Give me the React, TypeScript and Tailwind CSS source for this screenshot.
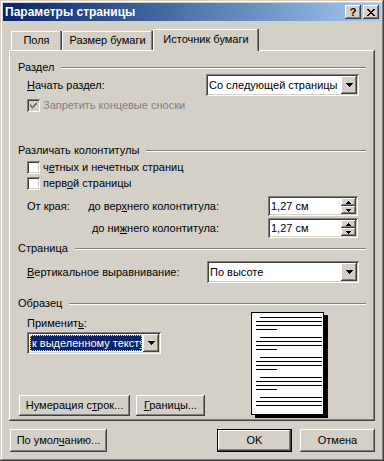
import React from "react";

const raised =
  "shadow-[inset_-1px_-1px_#404040,inset_1px_1px_#ffffff,inset_-2px_-2px_#808080]";
const sunken =
  "shadow-[inset_1px_1px_#808080,inset_-1px_-1px_#ffffff,inset_2px_2px_#404040,inset_-2px_-2px_#d4d0c8]";

function DownArrow() {
  return (
    <svg width="7" height="4" viewBox="0 0 7 4" shapeRendering="crispEdges">
      <rect x="0" y="0" width="7" height="1" />
      <rect x="1" y="1" width="5" height="1" />
      <rect x="2" y="2" width="3" height="1" />
      <rect x="3" y="3" width="1" height="1" />
    </svg>
  );
}

function SmallArrow({ up }: { up?: boolean }) {
  return (
    <svg width="5" height="3" viewBox="0 0 5 3" shapeRendering="crispEdges">
      {up ? (
        <>
          <rect x="2" y="0" width="1" height="1" />
          <rect x="1" y="1" width="3" height="1" />
          <rect x="0" y="2" width="5" height="1" />
        </>
      ) : (
        <>
          <rect x="0" y="0" width="5" height="1" />
          <rect x="1" y="1" width="3" height="1" />
          <rect x="2" y="2" width="1" height="1" />
        </>
      )}
    </svg>
  );
}

function CheckBox({ checked, disabled }: { checked?: boolean; disabled?: boolean }) {
  return (
    <div
      className={`w-[13px] h-[13px] shrink-0 flex items-center justify-center ${
        disabled ? "bg-[#d4d0c8]" : "bg-white"
      } ${sunken}`}
    >
      {checked && (
        <svg width="7" height="7" viewBox="0 0 7 7" shapeRendering="crispEdges" fill={disabled ? "#808080" : "#000"}>
          <rect x="0" y="2" width="1" height="3" />
          <rect x="1" y="3" width="1" height="3" />
          <rect x="2" y="4" width="1" height="3" />
          <rect x="3" y="3" width="1" height="3" />
          <rect x="4" y="2" width="1" height="3" />
          <rect x="5" y="1" width="1" height="3" />
          <rect x="6" y="0" width="1" height="3" />
        </svg>
      )}
    </div>
  );
}

function GroupHeader({ title, className }: { title: string; className: string }) {
  return (
    <div className={`flex items-center h-[13px] pl-[9px] pr-[9px] ${className}`}>
      <span>{title}</span>
      <div className="flex-1 ml-[7px] h-[2px] border-t border-t-[#808080] border-b border-b-white" />
    </div>
  );
}

function Combo({ text, className, focused }: { text: string; className: string; focused?: boolean }) {
  return (
    <div className={`h-[22px] bg-white flex items-center p-[2px] ${sunken} ${className}`}>
      {focused ? (
        <div className="flex-1 h-full p-[1px] overflow-hidden">
          <div className="h-full bg-[#0a246a] text-white border border-dotted border-[#f5db95] whitespace-nowrap overflow-hidden flex items-center pl-[1px]">
            {text}
          </div>
        </div>
      ) : (
        <div className="flex-1 pl-[1px] whitespace-nowrap overflow-hidden">{text}</div>
      )}
      <div className={`w-[16px] h-full shrink-0 bg-[#d4d0c8] flex items-center justify-center ${raised}`}>
        <DownArrow />
      </div>
    </div>
  );
}

function Spin({ value }: { value: string }) {
  return (
    <div className={`w-[90px] h-[20px] bg-white flex items-center p-[2px] ${sunken}`}>
      <div className="flex-1 pl-[1px]">{value}</div>
      <div className="w-[15px] h-full flex flex-col shrink-0">
        <div className={`flex-1 bg-[#d4d0c8] flex items-center justify-center ${raised}`}>
          <SmallArrow up />
        </div>
        <div className={`flex-1 bg-[#d4d0c8] flex items-center justify-center ${raised}`}>
          <SmallArrow />
        </div>
      </div>
    </div>
  );
}

function Button({ children, className }: { children: React.ReactNode; className: string }) {
  return (
    <div className={`bg-[#d4d0c8] flex items-center justify-center ${raised} ${className}`}>{children}</div>
  );
}

function Paragraph({ lines }: { lines: number }) {
  return (
    <div className="flex flex-col gap-[3px]">
      <div className="h-[1px] bg-black ml-[8px] mr-[1px]" />
      <div className="h-[1px] bg-black ml-[4px] mr-[1px]" />
      <div className="h-[1px] bg-black ml-[4px] mr-[1px]" />
      {lines > 3 && <div className="h-[1px] bg-black ml-[4px] w-[21px]" />}
    </div>
  );
}

export default function App() {
  return (
    <div
      className={`w-[384px] h-[461px] bg-[#d4d0c8] p-[3px] flex flex-col text-[11px] leading-[13px] text-black font-['Liberation_Sans',Arial,sans-serif] shadow-[inset_-1px_-1px_#404040,inset_1px_1px_#d4d0c8,inset_-2px_-2px_#808080,inset_2px_2px_#ffffff]`}
    >
      {/* title bar */}
      <div className="h-[18px] bg-linear-to-r from-[#0a246a] to-[#a6caf0] flex items-center pl-[2px] pr-[2px]">
        <span className="flex-1 text-white font-bold text-[12px]">Параметры страницы</span>
        <Button className="w-[16px] h-[14px] font-bold text-[11px] leading-[11px]">?</Button>
        <Button className="w-[16px] h-[14px] ml-[2px]">
          <svg width="8" height="7" viewBox="0 0 8 7" shapeRendering="crispEdges">
            <rect x="0" y="0" width="2" height="1" />
            <rect x="6" y="0" width="2" height="1" />
            <rect x="1" y="1" width="2" height="1" />
            <rect x="5" y="1" width="2" height="1" />
            <rect x="2" y="2" width="4" height="1" />
            <rect x="3" y="3" width="2" height="1" />
            <rect x="2" y="4" width="4" height="1" />
            <rect x="1" y="5" width="2" height="1" />
            <rect x="5" y="5" width="2" height="1" />
            <rect x="0" y="6" width="2" height="1" />
            <rect x="6" y="6" width="2" height="1" />
          </svg>
        </Button>
      </div>

      {/* tabs */}
      <div className="mt-[8px] h-[21px] ml-[8px] flex items-end">
        <div className="w-[51px] h-[19px] flex items-center justify-center bg-[#d4d0c8] shadow-[inset_-1px_0_#404040,inset_-2px_0_#808080,inset_1px_1px_#ffffff]">
          Поля
        </div>
        <div className="w-[91px] h-[19px] flex items-center justify-center bg-[#d4d0c8] shadow-[inset_-1px_0_#404040,inset_-2px_0_#808080,inset_1px_1px_#ffffff]">
          Размер бумаги
        </div>
        <div className="relative z-10 w-[106px] h-[22px] -mb-[1px] pb-[2px] flex items-center justify-center bg-[#d4d0c8] shadow-[inset_-1px_0_#404040,inset_-2px_0_#808080,inset_1px_1px_#ffffff]">
          Источник бумаги
        </div>
      </div>

      {/* panel */}
      <div className="ml-[6px] w-[366px] h-[371px] flex flex-col shadow-[inset_-1px_-1px_#404040,inset_1px_1px_#ffffff,inset_-2px_-2px_#808080]">
        <GroupHeader title="Раздел" className="mt-[11px]" />
        <div className="h-[22px] flex items-center justify-between pl-[18px] pr-[16px]">
          <span>
            <u>Н</u>ачать раздел:
          </span>
          <Combo text="Со следующей страницы" className="w-[153px]" />
        </div>
        <div className="mt-[3px] h-[13px] flex items-center pl-[18px]">
          <CheckBox checked disabled />
          <span className="ml-[3px] text-[#808080]">Запретить концевые сноски</span>
        </div>

        <GroupHeader title="Различать колонтитулы" className="mt-[32px]" />
        <div className="mt-[4px] h-[13px] flex items-center pl-[18px]">
          <CheckBox />
          <span className="ml-[3px]">
            ч<u>е</u>тных и нечетных страниц
          </span>
        </div>
        <div className="mt-[3px] h-[13px] flex items-center pl-[18px]">
          <CheckBox />
          <span className="ml-[3px]">
            перв<u>о</u>й страницы
          </span>
        </div>
        <div className="mt-[6px] h-[20px] flex items-center pl-[18px] pr-[17px]">
          <div className="w-[192px] flex justify-between">
            <span>От края:</span>
            <span>
              до вер<u>х</u>него колонтитула:
            </span>
          </div>
          <div className="ml-auto">
            <Spin value="1,27 см" />
          </div>
        </div>
        <div className="mt-[2px] h-[20px] flex items-center pl-[18px] pr-[17px]">
          <div className="w-[192px] text-right">
            до ни<u>ж</u>него колонтитула:
          </div>
          <div className="ml-auto">
            <Spin value="1,27 см" />
          </div>
        </div>

        <GroupHeader title="Страница" className="mt-[4px]" />
        <div className="mt-[6px] h-[22px] flex items-center justify-between pl-[18px] pr-[16px]">
          <span>
            <u>В</u>ертикальное выравнивание:
          </span>
          <Combo text="По высоте" className="w-[152px]" />
        </div>

        <GroupHeader title="Образец" className="mt-[14px]" />
        <div className="flex pl-[10px]">
          <div className="w-[232px] flex flex-col">
            <div className="mt-[7px] h-[13px] pl-[8px]">
              Применит<u>ь</u>:
            </div>
            <Combo text="к выделенному тексту" className="mt-[2px] ml-[8px] w-[134px]" focused />
            <div className="mt-[41px] flex gap-[6px]">
              <Button className="w-[111px] h-[21px]">
                <span>
                  Нумерация с<u>т</u>рок...
                </span>
              </Button>
              <Button className="w-[69px] h-[21px]">
                <span>
                  <u>Г</u>раницы...
                </span>
              </Button>
            </div>
          </div>
          <div className="mt-[2px] w-[73px] h-[103px] bg-white border border-black shadow-[4px_3px_0_0_#000] pt-[4px] flex flex-col gap-[7px] overflow-hidden">
            <Paragraph lines={4} />
            <Paragraph lines={4} />
            <Paragraph lines={4} />
            <Paragraph lines={4} />
            <Paragraph lines={3} />
          </div>
        </div>
      </div>

      {/* bottom buttons */}
      <div className="mt-[8px] flex items-center pl-[7px] pr-[6px]">
        <Button className="w-[97px] h-[23px]">
          <span>
            По умол<u>ч</u>анию...
          </span>
        </Button>
        <div className="flex-1" />
        <div className="w-[75px] h-[23px] border border-black">
          <Button className="w-full h-full">OK</Button>
        </div>
        <Button className="w-[75px] h-[23px] ml-[8px]">Отмена</Button>
      </div>
    </div>
  );
}
